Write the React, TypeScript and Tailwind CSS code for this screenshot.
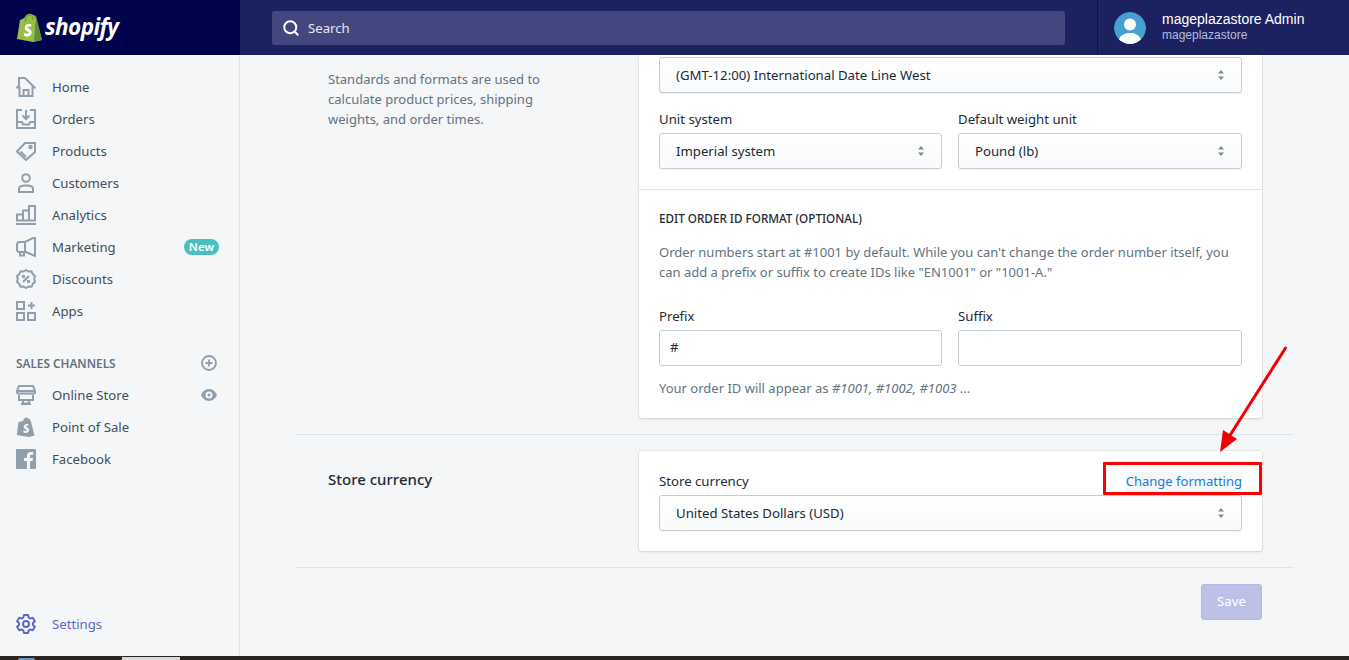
import type { ReactNode } from 'react';
import { Search } from 'lucide-react';

const noto = 'font-["Noto_Sans",sans-serif]';

function Icon({ children }: { children: ReactNode }) {
  return (
    <svg viewBox="0 0 20 20" className="h-5 w-5 shrink-0 text-[#919eab]" fill="none" stroke="currentColor" strokeWidth="2">
      {children}
    </svg>
  );
}

const navItems: { label: string; icon: ReactNode; badge?: boolean }[] = [
  {
    label: 'Home',
    icon: (
      <Icon>
        <path d="M1 10.500 3 8.500V1h5.500l1.500 1 8.500 8.500H16.500V19h-13v-8.500z" />
        <path d="M7.500 19v-6h5v6" />
      </Icon>
    ),
  },
  {
    label: 'Orders',
    icon: (
      <Icon>
        <path d="M6 1H1v18h18V1h-5" />
        <path d="M1 13h5l1 2.500h6l1-2.500h5" />
        <path d="M10 1v8.500M6.500 6.500l3.500 3.500 3.500-3.500" />
      </Icon>
    ),
  },
  {
    label: 'Products',
    icon: (
      <Icon>
        <path d="M9 2h10v9l-9 8-9-8.500z" />
        <path d="m4.500 10.500 5.500 5.500" />
        <circle cx="14.500" cy="6" r="1.200" />
      </Icon>
    ),
  },
  {
    label: 'Customers',
    icon: (
      <Icon>
        <circle cx="10" cy="5" r="3.800" />
        <path d="M3 15.500c0-1.800 3-3 7-3s7 1.200 7 3v3.500H3z" />
      </Icon>
    ),
  },
  {
    label: 'Analytics',
    icon: (
      <Icon>
        <path d="M0 19h20" />
        <path d="M1 15.500v-6h6v6zM7 15.500v-10h6v10zM13 15.500V1h6v14.500z" />
      </Icon>
    ),
  },
  {
    label: 'Marketing',
    badge: true,
    icon: (
      <Icon>
        <path d="M19 0v19l-9-4H3.500A2.500 2.500 0 0 1 1 12.500v-5A2.500 2.500 0 0 1 3.500 5H9z" />
        <path d="M9 5v10M4 15v3.500h4V15" />
      </Icon>
    ),
  },
  {
    label: 'Discounts',
    icon: (
      <Icon>
        <path d="M10 1l2.500 1.500 3-.2 1.200 2.800 2.300 2-.8 2.900.8 2.900-2.300 2-1.200 2.800-3-.2L10 19l-2.500-1.500-3 .2-1.200-2.800-2.300-2 .8-2.900-.8-2.900 2.300-2 1.200-2.800 3 .2z" />
        <path d="m7 13 6-6" />
        <circle cx="7.500" cy="7.500" r=".8" />
        <circle cx="12.500" cy="12.500" r=".8" />
      </Icon>
    ),
  },
  {
    label: 'Apps',
    icon: (
      <Icon>
        <path d="M1 1h7v7H1zM1 12h7v7H1zM12 12h7v7h-7zM15.500 1v7M12 4.500h7" />
      </Icon>
    ),
  },
];

const channelItems: { label: string; icon: ReactNode; eye?: boolean }[] = [
  {
    label: 'Online Store',
    eye: true,
    icon: (
      <Icon>
        <path d="M3 1h14l2 5v1.500c0 1.500-3 1.500-3 0 0 1.500-4 1.500-4 0 0 1.500-4 1.500-4 0 0 1.500-4 1.500-4 0 0 1.500-3 1.500-3 0V6zM1 6h18" />
        <path d="M3 10v5h14v-5M7 15v3.500h6V15M5 19h10" />
      </Icon>
    ),
  },
  {
    label: 'Point of Sale',
    icon: (
      <svg viewBox="0 0 20 20" className="h-5 w-5 shrink-0 text-[#919eab]" fill="currentColor">
        <path d="M7 4c.5-2 2-3.500 3.500-3.500 1 0 1.500.5 2 1.500l1-.3 1.500 3 3.500 13.800L13 20 .8 18 2.500 5z" />
        <path fill="#f4f6f8" d="M12.500 7.200c-3-1-4.800.8-4.800 2.500 0 2.300 3 2.300 3 3.500 0 1-1.500 1-3 .1l-.5 2c2.500 1.300 5.800.6 5.800-2.400 0-2.500-3-2.700-3-3.500 0-.8 1-.9 2.100-.4z" />
      </svg>
    ),
  },
  {
    label: 'Facebook',
    icon: (
      <svg viewBox="0 0 20 20" className="h-5 w-5 shrink-0 text-[#919eab]" fill="currentColor">
        <path d="M1 0h18a1 1 0 0 1 1 1v18a1 1 0 0 1-1 1h-5v-8h2.700l.4-3H14V7.200c0-.9.3-1.400 1.500-1.400h1.700V3.100c-.5-.1-1.300-.1-2.300-.1-2.400 0-4 1.400-4 4.100V9H8v3h2.900v8H1a1 1 0 0 1-1-1V1a1 1 0 0 1 1-1z" />
      </svg>
    ),
  },
];

function Carets() {
  return (
    <svg viewBox="0 0 8 12" className="h-3 w-2 text-[#7d8a98]" fill="currentColor">
      <path d="M4 1 7 4.500H1zM4 11 1 7.500h6z" />
    </svg>
  );
}

function Select({ value }: { value: string }) {
  return (
    <div className="flex h-9 items-center justify-between rounded-[3px] border border-[#c4cdd5] bg-gradient-to-b from-white to-[#f9fafb] pl-4 pr-4 text-[13.2px] text-[#212b36] shadow-[0_1px_0_rgba(22,29,37,0.05)]">
      <span className="translate-y-px">{value}</span>
      <Carets />
    </div>
  );
}

function Input({ value }: { value?: string }) {
  return (
    <div className="flex h-9 items-center rounded-[3px] border border-[#c4cdd5] bg-white px-2.5 text-[13.2px] text-[#212b36]">
      {value}
    </div>
  );
}

function Field({ label, children, fixed }: { label: string; children: ReactNode; fixed?: boolean }) {
  return (
    <div className={fixed ? 'w-[283px] shrink-0' : 'min-w-0 flex-1'}>
      <p className="mb-1 h-5 text-[13.200px] leading-5 text-[#212b36]">{label}</p>
      {children}
    </div>
  );
}

export default function App() {
  return (
    <div className={`relative flex h-[660px] w-[1349px] flex-col overflow-hidden bg-[#f4f6f8] ${noto}`}>
      <header className="flex h-[55px] shrink-0 bg-[#1c2260]">
        <div className="flex w-[240px] shrink-0 items-center gap-[3px] bg-[#00044c] pl-4">
          <svg viewBox="0 0 26 30" className="h-[30px] w-[26px]">
            <path fill="#95bf47" d="M1 26 4 7c3-1 4-2 5-3 2-4 6-4 8-2l2 .5 1 2L26 27l-9 2z" />
            <path fill="#5e8e3e" d="M20 2.500 26 27l-8 2z" />
            <path fill="none" stroke="#5e8e3e" strokeWidth="1" d="M9 9c0-4 2-7 4.500-7s3.500 2 3.500 5" />
            <path fill="#fff" d="M15.500 11.500c-4-1.300-6.800 1-6.800 3.500 0 3.200 4 3.300 4 4.800 0 1.300-2.300 1-4.300 0l-.7 2.900c3.800 1.700 8 .6 8-3.400 0-3.300-4-3.800-4-4.900 0-1 1.500-1.200 3.100-.6z" />
          </svg>
          <span className="text-[22.500px] font-bold italic leading-none tracking-[-0.6px] text-white">shopify</span>
        </div>
        <div className="flex flex-1 items-center pl-8 pr-8">
          <div className="flex h-[34px] w-[793px] items-center gap-2 rounded-[3px] bg-[#43467f] pl-2.5 text-[13.2px] text-[#e6e8f2]">
            <Search className="h-[18px] w-[18px] text-white" strokeWidth={2.600} />
            <span className="translate-y-px">Search</span>
          </div>
        </div>
        <div className="flex w-[252px] shrink-0 items-center gap-4 border-l border-[#0f1445] pb-1 pl-4 font-['Liberation_Sans',sans-serif]">
          <svg viewBox="0 0 32 32" className="mt-1 h-8 w-8 rounded-full">
            <circle cx="16" cy="16" r="16" fill="#47a0d4" />
            <circle cx="16" cy="12.500" r="6" fill="#fff" />
            <path fill="#fff" d="M5 28c1-5 6-6 8-7h6c2 1 7 2 8 7a16 16 0 0 1-22 0z" />
          </svg>
          <div>
            <p className="text-[14px] leading-[18px] text-white">mageplazastore Admin</p>
            <p className="text-[12px] leading-[14px] text-[#b6bbe0]">mageplazastore</p>
          </div>
        </div>
      </header>

      <div className="flex min-h-0 flex-1">
        <aside className="flex w-[240px] shrink-0 flex-col border-r border-[#dfe3e8] pb-[20px] pt-[16px] text-[13.2px] text-[#454f5b]">
          <nav>
            {navItems.map((item) => (
              <div key={item.label} className="flex h-8 items-center gap-4 pl-4 pr-5">
                {item.icon}
                <span className="flex-1 translate-y-px">{item.label}</span>
                {item.badge ? (
                  <span className="rounded-full bg-[#47c1bf] px-[5px] text-[11.5px] font-semibold leading-[16px] text-white">New</span>
                ) : null}
              </div>
            ))}
          </nav>
          <div className="mt-[20px] flex h-8 items-center justify-between pl-4 pr-[22px] text-[11.800px] font-semibold text-[#637381]">
            <span className="translate-y-px">SALES CHANNELS</span>
            <svg viewBox="0 0 16 16" className="h-4 w-4 text-[#919eab]" fill="none" stroke="currentColor" strokeWidth="1.800">
              <circle cx="8" cy="8" r="7" />
              <path d="M8 4.500v7M4.500 8h7" />
            </svg>
          </div>
          <nav>
            {channelItems.map((item) => (
              <div key={item.label} className="flex h-8 items-center gap-4 pl-4 pr-[22px]">
                {item.icon}
                <span className="flex-1 translate-y-px">{item.label}</span>
                {item.eye ? (
                  <svg viewBox="0 0 16 12" className="h-3 w-4 text-[#919eab]" fill="currentColor">
                    <path fillRule="evenodd" d="M8 0c4 0 7 3.500 8 6-1 2.500-4 6-8 6S1 8.500 0 6c1-2.500 4-6 8-6zm0 2.500a3.500 3.500 0 1 0 0 7 3.500 3.500 0 0 0 0-7zM8 4.500a1.500 1.500 0 1 1 0 3 1.500 1.500 0 0 1 0-3z" />
                  </svg>
                ) : null}
              </div>
            ))}
          </nav>
          <div className="mt-auto flex h-8 items-center gap-4 pl-4 text-[#5c6ac4]">
            <svg viewBox="0 0 20 20" className="h-5 w-5 shrink-0" fill="none" stroke="currentColor" strokeWidth="2">
              <path d="M8 1h4l.7 2.600 1.500.9 2.600-.7 2 3.400-1.900 1.900v1.800l1.900 1.900-2 3.400-2.600-.7-1.500.9L12 19H8l-.7-2.600-1.500-.9-2.600.7-2-3.400L3.100 10.900V9.100L1.200 7.200l2-3.400 2.600.7 1.500-.9z" />
              <circle cx="10" cy="10" r="3" />
            </svg>
            <span className="translate-y-px">Settings</span>
          </div>
        </aside>

        <main className="flex min-w-0 flex-1 flex-col pl-[56px] pr-[55px] text-[13px] text-[#212b36]">
          <section className="flex border-b border-[#dfe3e8] pb-4">
            <div className="w-[343px] shrink-0 pl-8 pt-[14px] leading-5 text-[#637381]">
              <p className="w-[230px]">Standards and formats are used to calculate product prices, shipping weights, and order times.</p>
            </div>
            <div className="mr-8 flex-1 rounded-b-[3px] bg-white pt-[2px] shadow-[0_0_0_1px_rgba(63,63,68,0.05),0_1px_3px_0_rgba(63,63,68,0.15)]">
              <div className="border-b border-[#dfe3e8] px-5 pb-5">
                <Select value="(GMT-12:00) International Date Line West" />
                <div className="mt-4 flex gap-4">
                  <Field label="Unit system" fixed>
                    <Select value="Imperial system" />
                  </Field>
                  <Field label="Default weight unit">
                    <Select value="Pound (lb)" />
                  </Field>
                </div>
              </div>
              <div className="px-5 pb-5 pt-[19px]">
                <h3 className="text-[11.700px] font-medium leading-[18px] text-[#212b36]">EDIT ORDER ID FORMAT (OPTIONAL)</h3>
                <p className="mt-[15px] leading-5 text-[#637381]">
                  Order numbers start at #1001 by default. While you can't change the order number itself, you can add a prefix or suffix to create IDs like "EN1001" or "1001-A."
                </p>
                <div className="mt-[24px] flex gap-4">
                  <Field label="Prefix" fixed>
                    <Input value="#" />
                  </Field>
                  <Field label="Suffix">
                    <Input />
                  </Field>
                </div>
                <p className="mt-3 leading-5 text-[#637381]">
                  Your order ID will appear as <em>#1001, #1002, #1003</em> ...
                </p>
              </div>
            </div>
          </section>

          <section className="flex border-b border-[#dfe3e8] py-4">
            <div className="w-[343px] shrink-0 pl-8 pt-[16px]">
              <h2 className="text-[15px] font-medium leading-6">Store currency</h2>
            </div>
            <div className="mr-8 flex-1 rounded-[3px] bg-white px-5 pb-5 pt-5 shadow-[0_0_0_1px_rgba(63,63,68,0.05),0_1px_3px_0_rgba(63,63,68,0.15)]">
              <div className="mb-1 flex h-5 translate-y-px items-center justify-between text-[13.2px]">
                <span>Store currency</span>
                <a className="bg-[#f4f6f8] text-[13px] text-[#1a7fd4]">Change formatting</a>
              </div>
              <Select value="United States Dollars (USD)" />
            </div>
          </section>

          <div className="mr-8 flex justify-end pt-4">
            <button className="h-9 w-[61px] rounded-[3px] border border-[#b3b9e2] bg-[#bdc1e6] text-[13.2px] text-white">Save</button>
          </div>
        </main>
      </div>

      {/* red annotation drawn on top of the screenshot */}
      <div className="absolute left-[1103px] top-[462px] h-[33px] w-[159px] rounded-[1px] border-[3px] border-[#ff0000]" />
      <svg className="absolute left-[1210px] top-[340px] h-[120px] w-[85px]" viewBox="0 0 85 120">
        <path d="M75.500 8 17 100" stroke="#f00000" strokeWidth="3" strokeLinecap="round" />
        <path d="M10 112 13 90l14 9z" fill="#f00000" />
      </svg>

      {/* bottom of the desktop taskbar */}
      <div className="absolute bottom-0 left-0 right-0 flex h-1 items-end bg-[#2b2524]">
        <div className="ml-[18px] h-[2px] w-[17px] rounded-t-full bg-[#5a9bc9]" />
        <div className="ml-[87px] h-[3px] w-[58px] bg-[#d8d8d8]" />
      </div>
    </div>
  );
}
